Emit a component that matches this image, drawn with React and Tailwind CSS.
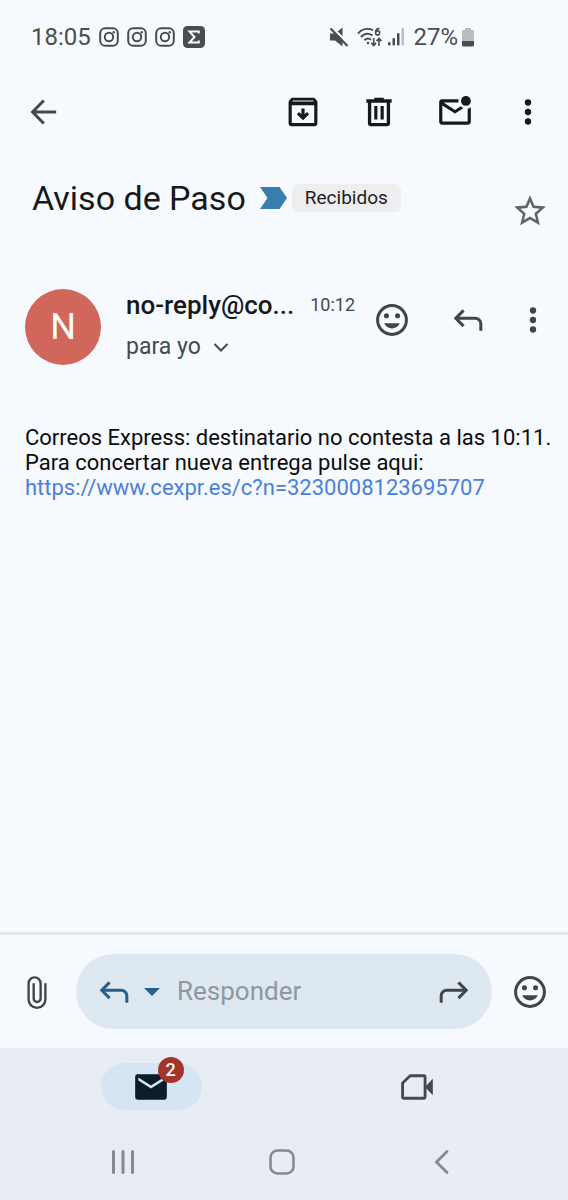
const statusIcon = 'h-5 w-5 shrink-0';

function Icon({ children, className = 'h-[38px] w-[38px]' }) {
  return (
    <svg viewBox="0 0 24 24" fill="currentColor" aria-hidden="true" className={`shrink-0 ${className}`}>
      {children}
    </svg>
  );
}

function IconButton({ label, className = '', children }) {
  return (
    <button type="button" aria-label={label} className={`flex shrink-0 items-center justify-center ${className}`}>
      {children}
    </button>
  );
}

function InstagramIcon() {
  return (
    <svg viewBox="0 0 20 20" fill="none" stroke="currentColor" strokeWidth="2" className={statusIcon}>
      <rect x="1.2" y="1.2" width="17.6" height="17.6" rx="5" />
      <circle cx="10" cy="10" r="4.2" />
      <circle cx="14.8" cy="5.2" r="1.2" fill="currentColor" stroke="none" />
    </svg>
  );
}

function SmileIcon() {
  return (
    <Icon>
      <circle cx="12" cy="12" r="9.1" fill="none" stroke="currentColor" strokeWidth="1.9" />
      <circle cx="8.5" cy="9.3" r="1.6" />
      <circle cx="15.5" cy="9.3" r="1.6" />
      <path d="M7.1 14h9.8c-.8 2-2.7 3.3-4.9 3.3S7.900 16 7.100 14z" />
    </Icon>
  );
}

function ReplyIcon({ className }) {
  return (
    <Icon className={className}>
      <g fill="none" stroke="currentColor" strokeWidth="1.9">
        <path d="M9.2 5.9 4.3 10.9l4.9 5" />
        <path d="M4.3 10.9h12.200a3.6 3.6 0 0 1 3.6 3.6v4.3" />
      </g>
    </Icon>
  );
}

function MoreIcon() {
  return (
    <Icon>
      <circle cx="12" cy="6" r="2" />
      <circle cx="12" cy="12" r="2" />
      <circle cx="12" cy="18" r="2" />
    </Icon>
  );
}

function StatusBar() {
  return (
    <div className="flex h-[74px] items-center justify-between pr-[93px] pl-[31px] text-[#4a4d50]">
      <div className="flex items-center gap-2">
        <span className="text-2xl">18:05</span>
        <InstagramIcon />
        <InstagramIcon />
        <InstagramIcon />
        <svg viewBox="0 0 22 22" className="h-[22px] w-[22px] shrink-0">
          <rect width="22" height="22" rx="4.5" fill="currentColor" />
          <path d="M15.8 7.6V5.500H6.500l5 5.500-5 5.500h9.300v-2.100" fill="none" stroke="#f6f9fe" strokeWidth="2" />
        </svg>
      </div>
      <div className="flex items-center gap-2">
        <svg viewBox="0 0 20 20" className={statusIcon}>
          <path d="M1 6.500h5L13.500.5v19L6 13.500H1z" fill="currentColor" />
          <path d="M3.200.5 19.500 17" stroke="#f6f9fe" strokeWidth="2.400" />
          <path d="M1.500 1.500 18.500 19" stroke="currentColor" strokeWidth="2.200" />
        </svg>
        <div className="flex items-center gap-1">
          <svg viewBox="0 0 26 20" fill="none" stroke="currentColor" strokeWidth="2" className="h-5 w-[26px] shrink-0">
            <path d="M1 6.500C5 1.800 11 1 16 3.200M4 10c3-3.400 7.500-4 11.500-1.600M7.500 13.200c2-2 4.500-2 6.500-.4" />
            <circle cx="11" cy="16" r="1.3" fill="currentColor" stroke="none" />
            <path d="M22.500 1.800c-2.500-.8-3.900 1-3.900 3.700" strokeWidth="1.6" />
            <circle cx="20.600" cy="5.900" r="2" strokeWidth="1.6" />
            <path d="M16.700 11v7.500m-2.400-2.600 2.400 2.600 2.400-2.600M22 19v-7.500m-2.400 2.600 2.400-2.600 2.400 2.600" strokeWidth="1.6" />
          </svg>
          <svg viewBox="0 0 18 20" fill="currentColor" className="h-5 w-[18px] shrink-0">
            <rect x="1" y="15" width="2.5" height="3.5" rx="1" />
            <rect x="5.500" y="11" width="2.5" height="7.5" rx="1" />
            <rect x="10" y="6" width="2.5" height="12.5" rx="1" />
            <rect x="14.500" y="1" width="2.5" height="17.5" rx="1" opacity=".35" />
          </svg>
        </div>
        <div className="flex items-center gap-[3px]">
          <span className="text-2xl">27%</span>
          <svg viewBox="0 0 14 20" className="h-5 w-[14px] shrink-0">
            <path d="M4 1h6v2h1.500A1.500 1.500 0 0 1 13 4.500V14H1V4.500A1.500 1.500 0 0 1 2.500 3H4z" fill="#b9bcc0" />
            <path d="M1 14h12v4a1.500 1.500 0 0 1-1.500 1.500h-9A1.500 1.500 0 0 1 1 18z" fill="currentColor" />
          </svg>
        </div>
      </div>
    </div>
  );
}

function Toolbar() {
  return (
    <header className="flex h-[76px] items-center justify-between px-6 text-[#16191c]">
      <IconButton label="Atrás" className="text-[#45494d]">
        <Icon>
          <path d="M12.500 4.700 5.400 12l7.100 7.300M5.400 12h14.900" fill="none" stroke="currentColor" strokeWidth="1.9" />
        </Icon>
      </IconButton>
      <div className="flex items-center gap-[38px]">
        <IconButton label="Archivar">
          <Icon>
            <path
              fillRule="evenodd"
              d="M5.400 3h13.200c.5 0 .9.200 1.200.6l1 1.300c.2.300.3.600.3.900V19a2 2 0 0 1-2 2H4.900a2 2 0 0 1-2-2V5.800c0-.3.100-.6.300-.9l1-1.300c.3-.4.700-.6 1.200-.6zM5.200 5.300h13.600l-.5-.6H5.700zM4.900 7.800V19h14.200V7.800z"
            />
            <path d="M11 9.800h2v3.600l1.500-1.400 1.400 1.400-3.900 3.800-3.900-3.800L9.500 12l1.500 1.400z" />
          </Icon>
        </IconButton>
        <IconButton label="Eliminar">
          <Icon>
            <path
              fillRule="evenodd"
              d="M9 3h6v1h5v2.100h-1V19a2 2 0 0 1-2 2H7a2 2 0 0 1-2-2V6.100H4V4h5zM7.100 6.100v12.800h9.800V6.100zM9 8.200h2v8.600H9zM13 8.200h2v8.600h-2z"
            />
          </Icon>
        </IconButton>
        <IconButton label="Marcar como no leído">
          <Icon>
            <path d="M4 4h10.200a5 5 0 0 0 .1 2H4.800L12 10.700l3.600-2.300a5 5 0 0 0 1.700 1.200L12 13 4 7.900V18h16V9.900a5 5 0 0 0 2-.9v9a2 2 0 0 1-2 2H4a2 2 0 0 1-2-2V6a2 2 0 0 1 2-2z" />
            <circle cx="18.900" cy="5" r="3.1" />
          </Icon>
        </IconButton>
        <IconButton label="Más opciones" className="w-8">
          <MoreIcon />
        </IconButton>
      </div>
    </header>
  );
}

function Subject() {
  return (
    <div className="flex items-start justify-between pt-7 pr-[19px] pl-8">
      <div className="flex h-10 items-center">
        <h1 className="text-[34px] leading-10 text-[#16191c]">Aviso de Paso</h1>
        <svg viewBox="0 0 28 22" className="ml-[14px] h-[22px] w-7 shrink-0">
          <path d="M0 0h19.500L27 11l-7.500 11H0l7.500-11z" fill="#377ead" />
        </svg>
        <span className="ml-1 rounded-md bg-[#efeeee] px-[13px] text-[19px] leading-7 text-[#202124]">Recibidos</span>
      </div>
      <IconButton label="Destacar" className="mt-[14px] text-[#616467]">
        <Icon>
          <path d="m22 9.200-7.200-.6L12 2 9.200 8.600 2 9.200l5.500 4.800L5.800 21l6.200-3.700 6.200 3.700-1.600-7zM12 15.400l-3.800 2.300 1-4.300-3.300-2.900 4.400-.4L12 6.100l1.700 4 4.400.4-3.300 2.900 1 4.300z" />
        </Icon>
      </IconButton>
    </div>
  );
}

function MessageHeader() {
  return (
    <div className="mt-[59px] flex items-start pr-[27px] pl-[25px]">
      <div className="flex h-[76px] w-[76px] shrink-0 items-center justify-center rounded-full bg-[#d1675b] text-4xl text-white">
        N
      </div>
      <div className="ml-[25px] min-w-0 flex-1">
        <div className="flex items-center gap-4 whitespace-nowrap leading-8">
          <span className="text-[26px] font-medium text-[#16191c]">no-reply@co...</span>
          <time className="text-lg leading-8 text-[#45494d]">10:12</time>
        </div>
        <button type="button" className="mt-[10px] flex items-center gap-3 text-[23px] leading-8 text-[#45494d]">
          para yo
          <svg viewBox="0 0 16 16" fill="none" stroke="currentColor" strokeWidth="2" className="h-4 w-4">
            <path d="m1.500 5 6.500 6.500L14.500 5" />
          </svg>
        </button>
      </div>
      <div className="mt-3 flex items-center gap-[38px] text-[#414548]">
        <IconButton label="Añadir reacción">
          <SmileIcon />
        </IconButton>
        <IconButton label="Responder">
          <ReplyIcon />
        </IconButton>
        <IconButton label="Más" className="w-4">
          <MoreIcon />
        </IconButton>
      </div>
    </div>
  );
}

function ReplyBar() {
  return (
    <div className="flex items-center border-t-3 border-[#e3e7ec] py-[19px] pr-[19px] pl-[18px] text-[#414548]">
      <IconButton label="Adjuntar archivo">
        <Icon>
          <path
            d="M17.300 6.500v10.200a5.300 5.300 0 0 1-10.600 0V6.600a3.800 3.800 0 0 1 7.600 0v9.500a2.200 2.200 0 0 1-4.400 0V6.500"
            fill="none"
            stroke="currentColor"
            strokeWidth="1.5"
          />
        </Icon>
      </IconButton>
      <div className="ml-5 flex h-[75px] min-w-0 flex-1 items-center rounded-full bg-[#dee8f1] px-[19px]">
        <button type="button" aria-label="Tipo de respuesta" className="flex items-center gap-[11px] text-[#265f8c]">
          <ReplyIcon />
          <svg viewBox="0 0 16 8" fill="currentColor" className="h-2 w-4">
            <path d="M0 0h16L8 8z" />
          </svg>
        </button>
        <input
          type="text"
          aria-label="Responder"
          placeholder="Responder"
          className="ml-[17px] min-w-0 flex-1 bg-transparent text-[26px] outline-none placeholder:text-[#8f989f]"
        />
        <IconButton label="Reenviar">
          <ReplyIcon className="h-[38px] w-[38px] -scale-x-100" />
        </IconButton>
      </div>
      <IconButton label="Emoji" className="ml-[19px]">
        <SmileIcon />
      </IconButton>
    </div>
  );
}

function BottomNav() {
  return (
    <nav className="bg-[#e8edf4]">
      <div className="grid grid-cols-2 justify-items-center px-[18px] pt-[15px]">
        <a href="#mail" aria-label="Correo" className="relative flex h-[47px] w-[101px] items-center justify-center rounded-full bg-[#d6e5f3] text-[#0d1d27]">
          <Icon>
            <path
              fillRule="evenodd"
              d="M3.500 4h17A1.500 1.500 0 0 1 22 5.500v13a1.500 1.500 0 0 1-1.500 1.500h-17A1.500 1.500 0 0 1 2 18.500v-13A1.500 1.500 0 0 1 3.500 4zM4 6v1.900l8 5.100 8-5.100V6l-8 5.100z"
            />
          </Icon>
          <span className="absolute -top-[6px] right-[18px] flex h-[26px] w-[26px] items-center justify-center rounded-full bg-[#a5342a] text-lg font-medium text-white">
            2
          </span>
        </a>
        <a href="#meet" aria-label="Meet" className="flex h-[47px] w-[101px] items-center justify-center text-[#45494f]">
          <Icon>
            <path d="M7.700 4.900 2.900 9.500v8.700c0 .5.400.9.900.9h12.400c.5 0 .9-.4.900-.9V5.800c0-.5-.4-.9-.9-.9z" fill="none" stroke="currentColor" strokeWidth="1.8" />
            <path d="m17 12 5-5.200v10.400z" />
          </Icon>
        </a>
      </div>
      <div className="grid grid-cols-3 justify-items-center pt-[37px] pr-[46px] pb-[23px] pl-[43px] text-[#86898f]">
        <IconButton label="Recientes">
          <svg viewBox="0 0 30 30" stroke="currentColor" strokeWidth="3" strokeLinecap="round" className="h-[30px] w-[30px]">
            <path d="M5.500 4.500v21M15 4.500v21M24.500 4.500v21" />
          </svg>
        </IconButton>
        <IconButton label="Inicio">
          <svg viewBox="0 0 30 30" fill="none" stroke="currentColor" strokeWidth="2.6" className="h-[30px] w-[30px]">
            <rect x="3.500" y="3.500" width="23" height="23" rx="7" />
          </svg>
        </IconButton>
        <IconButton label="Volver">
          <svg viewBox="0 0 30 30" fill="none" stroke="currentColor" strokeWidth="2.8" strokeLinecap="round" className="h-[30px] w-[30px]">
            <path d="M20 4.500 9.500 15 20 25.500" />
          </svg>
        </IconButton>
      </div>
    </nav>
  );
}

export default function App() {
  return (
    <div className="flex min-h-screen flex-col bg-[#f6f9fe] font-['Roboto',sans-serif]">
      <StatusBar />
      <Toolbar />
      <main className="flex-1">
        <Subject />
        <MessageHeader />
        <div className="mt-[60px] pr-4 pl-[25px] text-[22px] leading-[25px] text-[#0b0c0d]">
          <p>Correos Express: destinatario no contesta a las 10:11.</p>
          <p>Para concertar nueva entrega pulse aqui:</p>
          <a href="https://www.cexpr.es/c?n=3230008123695707" className="text-[#4b80da]">
            https://www.cexpr.es/c?n=3230008123695707
          </a>
        </div>
      </main>
      <ReplyBar />
      <BottomNav />
    </div>
  );
}
